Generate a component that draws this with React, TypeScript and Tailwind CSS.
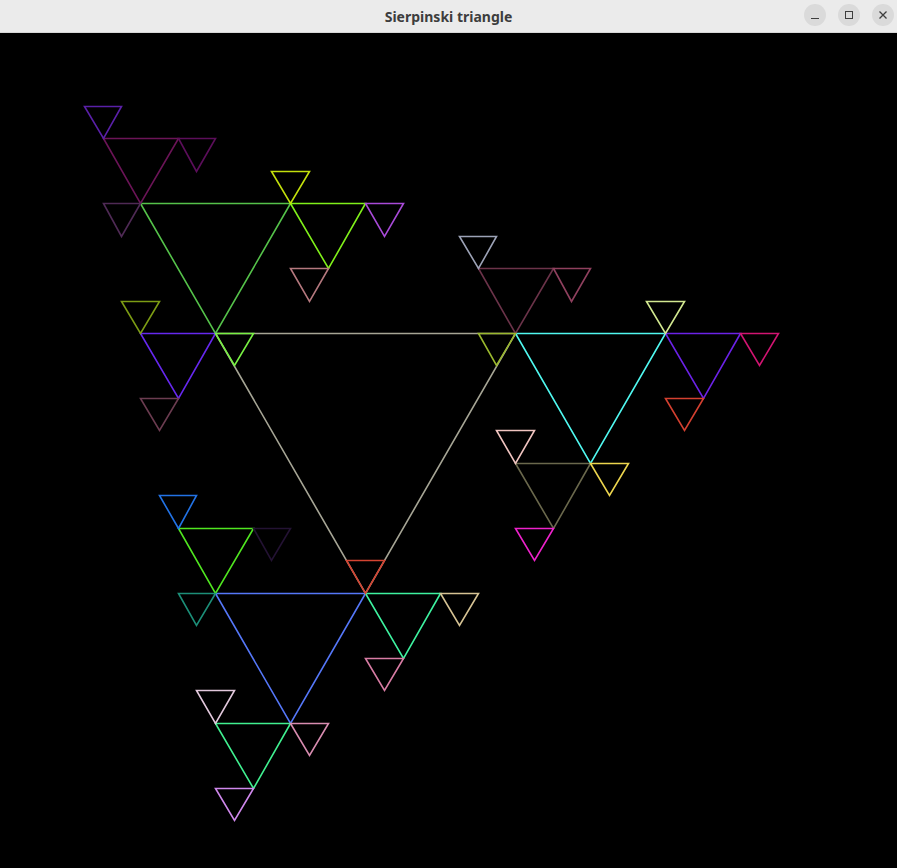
import React from 'react';

type Tri = { x: number; y: number; s: number; color: string };

const H = Math.sqrt(3) / 2;

// colours per level, in the order TL child, TR child, bottom child
const rootColor = '#a6a595';
const level1 = ['#55c24a', '#50f8f0', '#5577f8'];
const level2 = [
  ['#6b1457', '#80f01a', '#6628ee'],
  ['#6b3349', '#6b22e6', '#6a684c'],
  ['#50e620', '#3ef2a0', '#40f090'],
];
const level3 = [
  [
    ['#5a20a8', '#5b0e5a', '#4f2a55'],
    ['#c3e00c', '#a84ad8', '#b4787e'],
    ['#7c9c14', '#78f043', '#6b3c50'],
  ],
  [
    ['#9ca2b6', '#8f405e', '#9ab82e'],
    ['#d2e890', '#d21472', '#d44030'],
    ['#f0c4c0', '#ecd54e', '#ee22cc'],
  ],
  [
    ['#2272e4', '#231233', '#1c8e78'],
    ['#d44432', '#d6c394', '#d87ca4'],
    ['#e2c8dc', '#d88cb0', '#cf88ec'],
  ],
];

// child triangles of half size, hung from each corner of a downward triangle
const children = (t: Tri) => {
  const c = t.s / 2;
  return [
    { x: t.x - c / 2, y: t.y - c * H, s: c },
    { x: t.x + t.s, y: t.y, s: c },
    { x: t.x, y: t.y + t.s * H, s: c },
  ];
};

const buildTriangles = (): Tri[] => {
  const root: Tri = { x: 215, y: 333, s: 300, color: rootColor };
  const all: Tri[] = [root];
  const l1 = children(root).map((t, i) => ({ ...t, color: level1[i] }));
  all.push(...l1);
  const l2: Tri[][] = l1.map((p, i) => children(p).map((t, j) => ({ ...t, color: level2[i][j] })));
  l2.forEach((row) => all.push(...row));
  l2.forEach((row, i) =>
    row.forEach((p, j) => children(p).forEach((t, k) => all.push({ ...t, color: level3[i][j][k] }))),
  );
  return all;
};

const px = (v: number) => Math.round(v) + 0.5;

const points = (t: Tri) =>
  [
    [t.x, t.y],
    [t.x + t.s, t.y],
    [t.x + t.s / 2, t.y + t.s * H],
  ]
    .map(([a, b]) => `${px(a)},${px(b)}`)
    .join(' ');

const TitleBar = () => (
  <div className="relative flex h-[33px] items-center justify-center border-b border-[#d6d6d6] bg-[#ebebeb]">
    <span className="text-[14px] font-bold text-[#3d3d3d]" style={{ fontFamily: '"Noto Sans", "DejaVu Sans", sans-serif' }}>
      Sierpinski triangle
    </span>
    <div className="absolute right-[3px] top-[4px] flex gap-[12px]">
      <button className="flex h-[22px] w-[22px] items-center justify-center rounded-full bg-[#dadada]">
        <span className="mt-[7px] block h-[1px] w-[8px] bg-[#3d3d3d]" />
      </button>
      <button className="flex h-[22px] w-[22px] items-center justify-center rounded-full bg-[#dadada]">
        <span className="block h-[8px] w-[8px] border border-[#3d3d3d]" />
      </button>
      <button className="flex h-[22px] w-[22px] items-center justify-center rounded-full bg-[#dadada]">
        <svg width="10" height="10" viewBox="0 0 10 10">
          <path d="M1.5 1.5 L8.5 8.5 M8.5 1.5 L1.5 8.5" stroke="#3d3d3d" strokeWidth="1.3" />
        </svg>
      </button>
    </div>
  </div>
);

export default function App() {
  const tris = buildTriangles();
  return (
    <div className="flex h-[868px] w-[897px] flex-col overflow-hidden bg-black">
      <TitleBar />
      <div className="flex-1 bg-black">
        <svg width="897" height="835" viewBox="0 33 897 835" className="block">
          {tris.map((t, i) => (
            <polygon
              key={i}
              points={points(t)}
              fill="none"
              stroke={t.color}
              strokeWidth="1.6"
              strokeLinejoin="miter"
            />
          ))}
        </svg>
      </div>
    </div>
  );
}
